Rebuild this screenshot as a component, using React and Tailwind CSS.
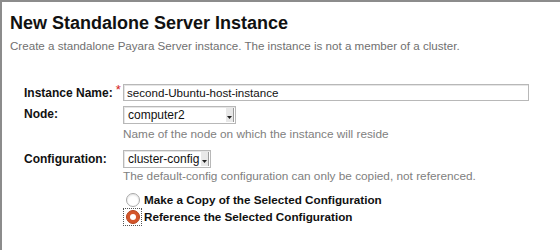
import React from "react";

function Select({ value, className = "" }) {
  return (
    <div className={`flex items-center self-start h-[18px] border border-[#b8b8b8] bg-white shadow-[inset_1px_1px_0_#e6e6e6] whitespace-nowrap ${className}`}>
      <span className="pl-[4px] pr-[2px] text-[12px] leading-none text-[#111]">{value}</span>
      <span className="w-[8px] h-[14px] mr-[1px] ml-auto bg-[#e8e8e8] border-r border-[#9a9a9a] flex items-end justify-center pb-[3px]">
        <svg width="5" height="3" viewBox="0 0 5 3"><path d="M0 0h5L2.5 3z" fill="#222" /></svg>
      </span>
    </div>
  );
}

export default function App() {
  return (
    <div className="w-[560px] h-[250px] bg-white border-t-2 border-l-2 border-[#8c8c8c] overflow-hidden" style={{ fontFamily: '"Liberation Sans", Arial, sans-serif' }}>
      <div className="pl-[8px] pt-[10px]">
        <h1 className="text-[18px] font-bold text-[#111] leading-[22px]">New Standalone Server Instance</h1>
        <p className="mt-[5px] text-[11.6px] text-[#707070] leading-[14px]">
          Create a standalone Payara Server instance. The instance is not a member of a cluster.
        </p>
      </div>
      <div className="pl-[22px] mt-[31px] flex flex-col">
        <div className="flex items-center h-[17px]">
          <div className="w-[99px] flex items-center text-[12px] font-bold text-[#111]">
            Instance Name:
            <span className="ml-[3px] -mt-[6px] text-[#d42020] font-normal text-[13px] leading-none">*</span>
          </div>
          <div className="w-[406px] h-[17px] border border-[#b8b8b8] shadow-[inset_1px_1px_0_#e6e6e6] flex items-center pl-[3px] text-[11.6px] text-[#111] whitespace-nowrap">
            second-Ubuntu-host-instance
          </div>
        </div>
        <div className="flex items-start mt-[5px]">
          <div className="w-[99px] pt-[1px] text-[12px] font-bold text-[#111] leading-[14px]">Node:</div>
          <div className="flex flex-col">
            <Select value="computer2" className="w-[113px]" />
            <div className="mt-[3px] text-[11.8px] text-[#808080] leading-[14px] whitespace-nowrap">Name of the node on which the instance will reside</div>
          </div>
        </div>
        <div className="flex items-start mt-[9px]">
          <div className="w-[99px] pt-[2px] text-[12px] font-bold text-[#111] leading-[14px]">Configuration:</div>
          <div className="flex flex-col">
            <Select value="cluster-config" />
            <div className="mt-[1px] text-[11.8px] text-[#808080] leading-[14px] whitespace-nowrap">The default-config configuration can only be copied, not referenced.</div>
            <div className="mt-[9px] flex items-center h-[16px]">
              <span className="w-[19px] h-[16px] flex items-center justify-center">
                <span className="w-[14px] h-[14px] rounded-full border border-[#a8a8a8] bg-white shadow-[inset_0_1px_2px_rgba(0,0,0,0.12)]" />
              </span>
              <span className="ml-[2px] text-[11.7px] font-bold text-[#111] whitespace-nowrap">Make a Copy of the Selected Configuration</span>
            </div>
            <div className="flex items-center h-[18px]">
              <span className="w-[19px] h-[18px] flex items-center justify-center border border-dotted border-[#555]">
                <span className="w-[14px] h-[14px] rounded-full bg-[#d4562b] border border-[#b5441d] flex items-center justify-center">
                  <span className="w-[6px] h-[6px] rounded-full bg-white" />
                </span>
              </span>
              <span className="ml-[2px] text-[11.7px] font-bold text-[#111] whitespace-nowrap">Reference the Selected Configuration</span>
            </div>
          </div>
        </div>
      </div>
    </div>
  );
}
